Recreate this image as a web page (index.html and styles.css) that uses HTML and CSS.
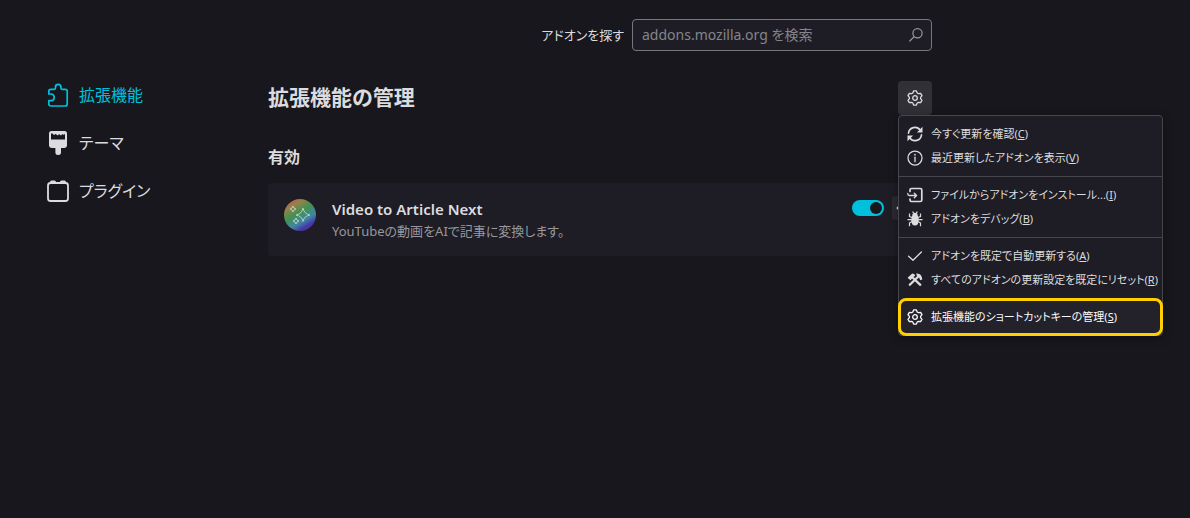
FILE: index.html
```html
<!DOCTYPE html>
<html lang="ja">
<head>
<meta charset="utf-8">
<meta name="viewport" content="width=device-width, initial-scale=1">
<title>拡張機能の管理</title>
<link rel="stylesheet" href="styles.css">
</head>
<body>
<svg class="defs" aria-hidden="true">
  <symbol id="gear" viewBox="0 0 16 16">
    <path d="M6.600 .9H9.400L10.200 3L11.400 3.700L13.600 3.300L15 5.700L13.600 7.400V8.600L15 10.300L13.600 12.700L11.400 12.300L10.200 13L9.400 15.100H6.600L5.800 13L4.600 12.300L2.400 12.700L1 10.300L2.400 8.600V7.400L1 5.700L2.400 3.300L4.600 3.700L5.800 3Z" fill="none" stroke="currentColor" stroke-width="1.300" stroke-linejoin="round"/>
    <circle cx="8" cy="8" r="2.300" fill="none" stroke="currentColor" stroke-width="1.300"/>
  </symbol>
</svg>
<div class="page">
  <nav class="sidebar">
    <a class="category selected" href="#extensions">
      <svg class="category-icon" viewBox="0 0 24 24" fill="none" stroke="currentColor" stroke-width="1.700" stroke-linejoin="round"><path d="M2.800 11V8.300Q2.800 6.300 4.800 6.300H8.300Q9.500 6.300 9.500 5.100V4Q9.500 1.300 12.200 1.300T14.900 4V5.100Q14.900 6.300 16.100 6.300H19.200Q21.200 6.300 21.200 8.300V21Q21.200 23 19.200 23H4.800Q2.800 23 2.800 21V17.700H5Q8.200 17.700 8.200 14.400T5 11Z"/></svg>
      <span>拡張機能</span>
    </a>
    <a class="category" href="#themes">
      <svg class="category-icon" viewBox="0 0 24 24" fill="currentColor"><path fill-rule="evenodd" d="M5.500 0H18.500Q21 0 21 2.500V14Q21 17 18 17H15V21.500Q15 24 12.200 24T9.400 21.500V17H6Q3 17 3 14V2.500Q3 0 5.500 0ZM5 2.500V8.500H19V2.500L18 4L16.500 3L15 4.500L13 3L12 4.500L9.500 3L8 4L6.500 2.500Z"/></svg>
      <span>テーマ</span>
    </a>
    <a class="category" href="#plugins">
      <svg class="category-icon" viewBox="0 0 24 24"><rect x="2" y="4" width="20" height="18" rx="2.500" fill="none" stroke="currentColor" stroke-width="1.800"/><path d="M4 5V3Q4 1.500 5.500 1.500H8.500Q10 1.500 10 3V5ZM14 5V3Q14 1.500 15.500 1.500H18.500Q20 1.500 20 3V5Z" fill="currentColor"/></svg>
      <span>プラグイン</span>
    </a>
  </nav>

  <main class="main">
    <form class="search">
      <label for="addon-search">アドオンを探す</label>
      <div class="search-box">
        <input id="addon-search" type="search" placeholder="addons.mozilla.org を検索">
        <svg class="search-icon" viewBox="0 0 16 16" fill="none" stroke="currentColor" stroke-width="1.200" stroke-linecap="round"><circle cx="9.500" cy="6.200" r="4.600"/><path d="M6.200 9.600L1.800 14"/></svg>
      </div>
    </form>

    <header class="heading">
      <h1>拡張機能の管理</h1>
      <div class="tools">
        <button class="tools-button" type="button" aria-label="ツール" aria-expanded="true"><svg class="icon"><use href="#gear"/></svg></button>
        <div class="menu" role="menu">
          <div class="menu-group">
            <button class="menu-item" type="button" role="menuitem">
              <svg class="icon" viewBox="0 0 16 16" fill="none" stroke="currentColor" stroke-width="1.600" stroke-linecap="round"><path d="M1.500 7.200A6.500 6.500 0 0 1 13.300 4.200"/><path d="M14.500 8.800A6.500 6.500 0 0 1 2.700 11.800"/><path d="M15.500 .8V6.400H9.900ZM.5 15.200V9.600H6.100Z" fill="currentColor" stroke="none"/></svg>
              <span>今すぐ更新を確認(<u>C</u>)</span>
            </button>
            <button class="menu-item" type="button" role="menuitem">
              <svg class="icon" viewBox="0 0 16 16"><circle cx="8" cy="8" r="7" fill="none" stroke="currentColor" stroke-width="1.250"/><path d="M8 7.200V11.700" stroke="currentColor" stroke-width="1.300" stroke-linecap="round"/><circle cx="8" cy="4.700" r=".85" fill="currentColor"/></svg>
              <span>最近更新したアドオンを表示(<u>V</u>)</span>
            </button>
          </div>
          <div class="menu-group">
            <button class="menu-item" type="button" role="menuitem">
              <svg class="icon" viewBox="0 0 16 16" fill="none" stroke="currentColor" stroke-width="1.700" stroke-linecap="round" stroke-linejoin="round"><path d="M3 4.500V3Q3 1.500 4.500 1.500H13.300Q14.800 1.500 14.800 3V13Q14.800 14.500 13.300 14.500H4.500Q3 14.500 3 13V12"/><path d="M.8 6.500V7Q.8 8.500 2.300 8.500H9.500M7.300 6.200L9.600 8.500L7.300 10.800" stroke-width="1.300"/></svg>
              <span>ファイルからアドオンをインストール...(<u>I</u>)</span>
            </button>
            <button class="menu-item" type="button" role="menuitem">
              <svg class="icon" viewBox="0 0 16 16" fill="currentColor"><path d="M5.300 4.400Q5.300 1.800 8 1.800T10.700 4.400Q11.700 5.600 11.700 9Q11.700 14.600 8 14.600T4.300 9Q4.300 5.600 5.300 4.400Z"/><path d="M5.700 .6L6.700 2.600M10.300 .6L9.300 2.600M5 6.500L2.500 5.500V2.500M11 6.500L13.500 5.500V2.500M5 8.600H.5M11 8.600H15.500M5 10.500L2.500 12V15.300M11 10.500L13.500 12V15.300" fill="none" stroke="currentColor" stroke-width="1.200"/></svg>
              <span>アドオンをデバッグ(<u>B</u>)</span>
            </button>
          </div>
          <div class="menu-group">
            <button class="menu-item" type="button" role="menuitemcheckbox" aria-checked="true">
              <svg class="icon" viewBox="0 0 16 16" fill="none" stroke="currentColor" stroke-width="1.300" stroke-linecap="round" stroke-linejoin="round"><path d="M1.600 8.200L6 12.200L14.400 4"/></svg>
              <span>アドオンを既定で自動更新する(<u>A</u>)</span>
            </button>
            <button class="menu-item" type="button" role="menuitem">
              <svg class="icon" viewBox="0 0 16 16" fill="none" stroke="currentColor"><path d="M5.500 5.500L13.300 12.800M10.800 5L2.800 12.800" stroke-width="2.300" stroke-linecap="round"/><path d="M.6 5.800L5.200 1.600Q7.400 1.600 8.300 3.600L7 4.600L3.400 8.200Z" fill="currentColor" stroke="none"/><path d="M9.200 1.600Q14.800 1 15.300 7.600L13.200 8.200Q12.600 5.800 11 4.800T9.200 1.600Z" fill="currentColor" stroke="none"/></svg>
              <span>すべてのアドオンの更新設定を既定にリセット(<u>R</u>)</span>
            </button>
          </div>
          <div class="menu-group highlighted">
            <button class="menu-item" type="button" role="menuitem">
              <svg class="icon"><use href="#gear"/></svg>
              <span>拡張機能のショートカットキーの管理(<u>S</u>)</span>
            </button>
          </div>
        </div>
      </div>
    </header>

    <h2>有効</h2>
    <article class="card">
      <svg class="addon-icon" viewBox="0 0 32 32">
        <defs><linearGradient id="rainbow" x1=".2" y1="0" x2=".8" y2="1"><stop offset="0" stop-color="#b9544b"/><stop offset=".18" stop-color="#9a8049"/><stop offset=".42" stop-color="#439250"/><stop offset=".68" stop-color="#4184a4"/><stop offset=".85" stop-color="#4338aa"/><stop offset="1" stop-color="#6926a3"/></linearGradient></defs>
        <circle cx="16" cy="16" r="16" fill="url(#rainbow)"/>
        <g fill="none" stroke="#b4cfc6" stroke-linejoin="round"><path d="M19 9Q20 15 26 16Q20 17 19 22.500Q18 17 12 16Q18 15 19 9Z"/><path d="M9 7Q9.500 9.500 12 10Q9.500 10.500 9 13Q8.500 10.500 6 10Q8.500 9.500 9 7ZM12 19Q12.500 21.500 15 22Q12.500 22.500 12 25Q11.500 22.500 9 22Q11.500 21.500 12 19Z"/></g>
      </svg>
      <div class="addon-text">
        <h3>Video to Article Next</h3>
        <p>YouTubeの動画をAIで記事に変換します。</p>
      </div>
      <input class="toggle" type="checkbox" role="switch" aria-label="Video to Article Next を有効化" checked>
      <button class="more" type="button" aria-label="その他のオプション"><svg class="icon" viewBox="0 0 16 16" fill="currentColor"><circle cx="2" cy="8" r="1.500"/><circle cx="8" cy="8" r="1.500"/><circle cx="14" cy="8" r="1.500"/></svg></button>
    </article>
  </main>
</div>
</body>
</html>
```
FILE: styles.css
```css
:root {
  --page: #18171d;
  --surface: #1e1d25;
  --button: #303036;
  --line: #47464d;
  --text: #dcdcdf;
  --muted: #98989c;
  --accent: #00c0de;
  --highlight: #ffcf00;
}

* {
  box-sizing: border-box;
}

body {
  margin: 0;
  background: var(--page);
  color: var(--text);
  font-family: "Noto Sans", "Noto Sans CJK JP", sans-serif;
  font-size: 13px;
  line-height: 24px;
  font-feature-settings: "palt";
}

button,
input {
  font: inherit;
  font-feature-settings: inherit;
  color: inherit;
}

h1,
h2,
h3,
p {
  margin: 0;
}

.defs {
  position: absolute;
  width: 0;
  height: 0;
}

.icon {
  display: block;
  flex: none;
  width: 16px;
  height: 16px;
}

.page {
  display: flex;
  min-height: 100vh;
}

.sidebar {
  flex: none;
  width: 268px;
  padding: 71px 0 0 46px;
}

.category {
  display: flex;
  align-items: center;
  gap: 9px;
  height: 48px;
  color: inherit;
  font-size: 16px;
  text-decoration: none;
}

.category.selected {
  color: var(--accent);
}

.category-icon {
  width: 24px;
  height: 24px;
}

.main {
  flex: 1;
  max-width: 664px;
  padding-top: 19px;
}

.search {
  display: flex;
  align-items: center;
  justify-content: flex-end;
  gap: 8px;
}

.search-box {
  display: flex;
  align-items: center;
  width: 300px;
  height: 32px;
  padding: 0 7px 0 9px;
  border: 1px solid #77767b;
  border-radius: 4px;
  background: var(--surface);
}

.search-box input {
  flex: 1;
  min-width: 0;
  padding: 0;
  border: 0;
  outline: 0;
  background: none;
  font-size: 14px;
}

.search-box input::placeholder {
  color: #85858a;
  opacity: 1;
}

.search-icon {
  width: 16px;
  height: 16px;
  color: var(--muted);
}

.heading {
  display: flex;
  align-items: flex-start;
  justify-content: space-between;
  margin-top: 30px;
}

h1 {
  font-size: 21px;
  line-height: 32px;
  font-weight: 600;
}

h2 {
  margin: 30px 0 14px;
  font-size: 16px;
  font-weight: 600;
}

.tools {
  position: relative;
}

.tools-button {
  display: grid;
  place-items: center;
  width: 34px;
  height: 34px;
  padding: 0;
  border: 0;
  border-radius: 4px;
  background: var(--button);
}

.menu {
  position: absolute;
  z-index: 1;
  top: 100%;
  left: 0;
  width: 265px;
  border: 1px solid var(--line);
  border-radius: 4px;
  background: var(--surface);
  box-shadow: 0 2px 8px #0006;
}

.menu-group {
  padding: 6px 0;
}

.menu-group + .menu-group {
  border-top: 1px solid var(--line);
}

.menu-group + .highlighted {
  margin: 0 -1px -1px;
  padding: 4px 2px;
  border: 3px solid var(--highlight);
  border-radius: 8px;
  background: #23222b;
  color: #fbfbfe;
}

.menu-item {
  display: flex;
  align-items: center;
  gap: 8px;
  width: 100%;
  height: 24px;
  padding: 0 8px;
  border: 0;
  background: none;
  font-size: 11px;
  white-space: nowrap;
}

.highlighted .menu-item {
  padding: 0 4px;
}

.card {
  display: flex;
  align-items: flex-start;
  padding: 16px 16px 14px;
  border-radius: 4px;
  background: var(--surface);
}

.addon-icon {
  flex: none;
  width: 32px;
  height: 32px;
  margin-right: 16px;
}

.addon-text {
  flex: 1;
  min-width: 0;
}

h3 {
  font-size: 15px;
  line-height: 21px;
  font-weight: 600;
}

.addon-text p {
  color: var(--muted);
  line-height: 22px;
}

.toggle {
  appearance: none;
  display: flex;
  flex: none;
  justify-content: flex-end;
  width: 32px;
  height: 16px;
  margin: 1px 8px 0 0;
  padding: 2px;
  border-radius: 8px;
  background: var(--accent);
}

.toggle::before {
  content: "";
  width: 12px;
  height: 12px;
  border-radius: 50%;
  background: var(--page);
}

.more {
  display: grid;
  place-items: center;
  width: 24px;
  height: 24px;
  margin-top: -3px;
  padding: 0;
  border: 0;
  border-radius: 4px;
  background: #2b2a31;
}
```
